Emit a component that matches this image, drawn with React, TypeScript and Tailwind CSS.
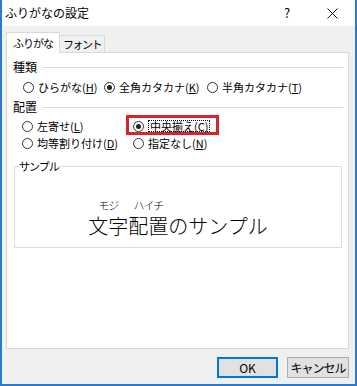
import type { ReactNode } from "react";

function Radio({ checked = false }: { checked?: boolean }) {
  return (
    <span className="flex h-[11px] w-[11px] shrink-0 items-center justify-center rounded-full border border-[#333] bg-white">
      {checked && <span className="h-[5px] w-[5px] rounded-full bg-[#222]" />}
    </span>
  );
}

function Option({ label, keyChar, checked, className = "" }: { label: string; keyChar: string; checked?: boolean; className?: string }) {
  return (
    <div className={"flex items-center gap-[4px] whitespace-nowrap " + className}>
      <Radio checked={checked} />
      <span>
        {label}(<u>{keyChar}</u>)
      </span>
    </div>
  );
}

function GroupLabel({ children }: { children: ReactNode }) {
  return (
    <div className="flex h-[16px] items-center pl-[6px] pr-[5px]">
      <span className="text-[12px]">{children}</span>
      <span className="ml-[5px] h-px flex-1 bg-[#dcdcdc]" />
    </div>
  );
}

export default function App() {
  return (
    <div className="flex h-[386px] w-[357px] flex-col border-x-2 border-b-2 border-[#2a7ad1] bg-[#f0f0f0] font-['Noto_Sans_CJK_JP','Noto_Sans_CJK_SC',sans-serif] text-[11px] leading-[16px] text-black">
      {/* title bar */}
      <div className="flex h-[26px] shrink-0 items-center bg-white">
        <span className="pl-[3px] text-[12px]">ふりがなの設定</span>
        <span className="ml-auto w-[46px] text-center text-[13px]">?</span>
        <span className="flex w-[45px] items-center justify-center">
          <svg width="11" height="11" viewBox="0 0 11 11">
            <path d="M0.5 0.5 L10.5 10.5 M10.5 0.5 L0.5 10.5" stroke="#111" strokeWidth="1" />
          </svg>
        </span>
      </div>

      <div className="flex flex-1 flex-col pl-[4px] pr-[6px]">
        {/* tabs */}
        <div className="mt-[6px] flex h-[21px] items-end">
          <div className="relative z-10 h-[21px] w-[54px] whitespace-nowrap border border-b-0 border-[#d9d9d9] bg-white pl-[6px] pt-[2px] text-[11px] tracking-[-1px]">
            ふりがな
          </div>
          <div className="h-[18px] w-[45px] whitespace-nowrap border-t border-r border-[#d9d9d9] bg-[#f0f0f0] pl-[3px] text-[11px] tracking-[-1.5px]">
            フォント
          </div>
        </div>

        {/* panel */}
        <div className="-mt-px h-[297px] border border-[#d9d9d9] bg-white">
          <div className="mt-[6px]">
            <GroupLabel>種類</GroupLabel>
          </div>
          <div className="mt-[4px] flex h-[16px] items-center pl-[16px]">
            <Option label="ひらがな" keyChar="H" className="w-[81px]" />
            <Option label="全角カタカナ" keyChar="K" checked className="w-[103px]" />
            <Option label="半角カタカナ" keyChar="T" />
          </div>

          <div className="mt-[4px]">
            <GroupLabel>配置</GroupLabel>
          </div>
          <div className="mt-[3px] flex h-[16px] items-center pl-[15px]">
            <Option label="左寄せ" keyChar="L" className="w-[111px]" />
            <div className="relative flex items-center gap-[4px] whitespace-nowrap">
              <Radio checked />
              <span className="flex h-[12px] items-center border border-dotted border-black px-px">
                中央揃え(<u>C</u>)
              </span>
              <div className="absolute -left-[7px] -top-[5px] h-[20px] w-[93px] border-[3px] border-[#d8232c]" />
            </div>
          </div>
          <div className="mt-[1px] flex h-[16px] items-center pl-[15px]">
            <Option label="均等割り付け" keyChar="D" className="w-[111px]" />
            <Option label="指定なし" keyChar="N" />
          </div>

          <fieldset className="ml-[7px] mr-[6px] mt-[7px] h-[90px] border border-[#dcdcdc]">
            <legend className="ml-[4px] px-0 text-[11px] leading-[16px] tracking-[-1px]">サンプル</legend>
            <div className="mt-[23px] text-center text-[20px] font-light leading-[24px]">
              <ruby className="[ruby-align:center]">
                文字<rt className="pb-[3px] text-[11px] leading-[12px] tracking-[-1px] [ruby-align:center]">モジ</rt>
              </ruby>
              <ruby className="[ruby-align:center]">
                配置<rt className="pb-[3px] text-[11px] leading-[12px] tracking-[-1px] [ruby-align:center]">ハイチ</rt>
              </ruby>
              のサンプル
            </div>
          </fieldset>
        </div>

        {/* buttons */}
        <div className="mt-[8px] flex justify-end gap-[9px]">
          <button className="h-[21px] w-[61px] border-2 border-[#0078d7] bg-[#e1e1e1] text-[12px] leading-[16px]">OK</button>
          <button className="h-[21px] w-[62px] whitespace-nowrap border border-[#adadad] bg-[#e1e1e1] text-[12px] leading-[16px] tracking-[-1px]">キャンセル</button>
        </div>
      </div>
    </div>
  );
}
